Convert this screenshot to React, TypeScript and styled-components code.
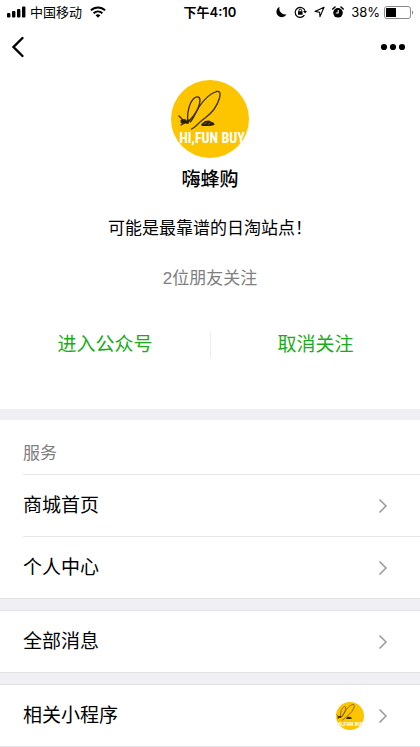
import React from "react";
import styled, { createGlobalStyle } from "styled-components";

const GlobalStyle = createGlobalStyle`
  * { box-sizing: border-box; }
  body {
    margin: 0;
    background: #fff;
    color: #000;
    font-family: "Liberation Sans", "Noto Sans CJK SC", sans-serif;
  }
  button { font: inherit; color: inherit; border: 0; padding: 0; background: none; cursor: pointer; }
  h1, h2, p, ul { margin: 0; padding: 0; font-weight: 400; }
  svg { display: block; flex: none; }
`;

const Page = styled.div`
  display: flex;
  flex-direction: column;
  background: #fff;
`;

const StatusBar = styled.div`
  display: grid;
  grid-template-columns: 1fr auto 1fr;
  align-items: center;
  height: 24px;
  padding: 0 6px;
  font-family: Inter, "Noto Sans CJK SC", sans-serif;
  font-size: 13px;
  line-height: 20px;
  white-space: nowrap;
`;

const StatusGroup = styled.div<{ $end?: boolean; $gap: number }>`
  display: flex;
  align-items: center;
  justify-content: ${(p) => (p.$end ? "flex-end" : "flex-start")};
  gap: ${(p) => p.$gap}px;
`;

const Clock = styled.time`
  font-weight: 600;
`;

const NavBar = styled.nav`
  display: flex;
  align-items: center;
  justify-content: space-between;
  height: 46px;
  padding: 0 14px 0 10px;
`;

const NavButton = styled.button`
  display: flex;
  align-items: center;
  height: 44px;
`;

const Profile = styled.header`
  display: flex;
  flex-direction: column;
  align-items: center;
  padding: 10px 0 51px;
  text-align: center;
`;

const Name = styled.h1`
  margin-top: 8px;
  font-size: 19px;
  line-height: 28px;
  font-weight: 500;
`;

const Summary = styled.p`
  margin-top: 22px;
  font-size: 17px;
  line-height: 26px;
`;

const Friends = styled.p`
  margin-top: 24px;
  font-size: 17px;
  line-height: 26px;
  color: #808080;
`;

const Actions = styled.div`
  display: grid;
  grid-template-columns: 1fr 1fr;
  align-self: stretch;
  margin-top: 40px;
`;

const Action = styled.button`
  height: 26px;
  font-size: 19px;
  line-height: 26px;
  color: #1aad19;

  & + & { border-left: 1px solid #ececec; }
`;

const Divider = styled.div`
  height: 11px;
  background: #efeff4;
`;

const Section = styled.section<{ $ruled?: boolean }>`
  border-top: ${(p) => (p.$ruled ? "1px solid #e2e2e4" : "0")};
  border-bottom: 1px solid #e2e2e4;
`;

const SectionTitle = styled.h2`
  padding: 21px 0 7px 23px;
  font-size: 17px;
  line-height: 26px;
  color: #808080;
`;

const Rows = styled.ul`
  list-style: none;
`;

const RowItem = styled.li<{ $ruled?: boolean }>`
  margin-left: 23px;
  border-top: ${(p) => (p.$ruled ? "1px solid #e8e8e8" : "0")};
`;

const RowButton = styled.button`
  display: flex;
  align-items: center;
  width: 100%;
  height: 61px;
  padding-right: 32px;
  font-size: 19px;
  line-height: 28px;
  text-align: left;
`;

const RowLabel = styled.span`
  flex: 1;
`;

const RowLogo = styled.span`
  margin-right: 14px;
`;

const LogoText = styled.text`
  font-family: "Liberation Sans Narrow", "Roboto Condensed", Roboto, sans-serif;
  font-size: 14px;
  font-weight: 700;
  fill: #fff;
`;

type LogoProps = { size: number; id: string; inset?: number };

const Logo = ({ size, id, inset = 0 }: LogoProps) => (
  <svg
    width={size}
    height={size}
    viewBox={`${inset} ${inset} ${78 - inset * 2} ${78 - inset * 2}`}
    role="img"
    aria-label="HI,FUN BUY"
  >
    <defs>
      <clipPath id={id}>
        <circle cx="39" cy="39" r={39 - inset} />
      </clipPath>
    </defs>
    <g clipPath={`url(#${id})`}>
      <rect width="78" height="78" fill="#fdc400" />
      <g fill="none" stroke="#3a2c08" strokeWidth="1.3" strokeLinecap="round">
        <path d="M16.5 40C16 31 19 21 24 17.5C28 15.5 30 18 28.5 24C27 30 24 35 18 41" />
        <path d="M19 42C22 40 24 33 28 27C32 21 39 13.5 45.5 11.5C49.5 10.5 49.5 14 48.5 18C46.5 25 41 33 34 38C28 42 25 47 20.5 49" />
        <path d="M8 36L11 39M12 44L10 45" />
      </g>
      <ellipse cx="12.5" cy="41.5" rx="3" ry="2.4" fill="#2b2108" />
      <path d="M14.5 41L18.5 39L17.5 44L14.5 43.5Z" fill="#2b2108" />
      <path d="M30 44.5L34 41L38 40.5L43 43L43.5 45L39 46L31 46Z" fill="#2b2108" />
      <path d="M33 44L36 42.5M37 44.5L39.5 42.5" stroke="#8a6a10" strokeWidth="0.8" />
      <LogoText x="41" y="63" textAnchor="middle">HI,FUN BUY</LogoText>
    </g>
  </svg>
);

const Signal = () => (
  <svg width="20" height="12" viewBox="0 0 20 12" aria-hidden="true">
    <rect x="1" y="7" width="3.4" height="4.5" rx="1" />
    <rect x="6" y="5" width="3.4" height="6.5" rx="1" />
    <rect x="11" y="3" width="3.4" height="8.5" rx="1" />
    <rect x="16" y="0.5" width="3.4" height="11" rx="1" />
  </svg>
);

const Wifi = () => (
  <svg width="16" height="12" viewBox="0 0 16 12" aria-hidden="true">
    <g fill="none" stroke="#000" strokeWidth="2">
      <path d="M0.9 4.4C5 0.4 11 0.4 15.1 4.4" />
      <path d="M3.6 7.2C6.2 4.8 9.8 4.8 12.4 7.2" />
    </g>
    <path d="M5.6 9.2Q8 7.2 10.4 9.2L8 11.7Z" />
  </svg>
);

const Moon = () => (
  <svg width="11" height="12" viewBox="0 0 11 12" aria-hidden="true">
    <path d="M3.6 0.8A5.4 5.4 0 1 0 10.6 8.2A5.8 5.8 0 0 1 3.6 0.8Z" />
  </svg>
);

const RotationLock = () => (
  <svg width="13" height="12" viewBox="0 0 13 12" aria-hidden="true">
    <path d="M10.4 9.2A5 5 0 1 1 11 4.9" fill="none" stroke="#000" strokeWidth="1.2" />
    <path d="M9 5H13L11.2 7.6Z" />
    <rect x="4" y="5.2" width="4.6" height="3.6" rx="0.4" />
    <path d="M5 5.4V4.4A1.3 1.3 0 0 1 7.6 4.4V5.4" fill="none" stroke="#000" />
  </svg>
);

const Location = () => (
  <svg width="11" height="12" viewBox="0 0 11 12" aria-hidden="true">
    <path d="M10 1.3L1 5.4L5.6 6.2L6 10.6Z" fill="none" stroke="#000" strokeWidth="1.1" strokeLinejoin="round" />
  </svg>
);

const Alarm = () => (
  <svg width="12" height="12" viewBox="0 0 12 12" aria-hidden="true">
    <circle cx="6" cy="6.8" r="4.8" />
    <path d="M0.8 3L3 1M11.2 3L9 1" stroke="#000" strokeWidth="1.6" strokeLinecap="round" />
    <path d="M6.2 4V7H3.8" fill="none" stroke="#fff" strokeWidth="1.1" />
  </svg>
);

const Battery = () => (
  <svg width="30" height="13" viewBox="0 0 30 13" aria-hidden="true">
    <rect x="0.5" y="0.5" width="26" height="12" rx="2.5" fill="none" stroke="#8a8a8a" />
    <rect x="2" y="2" width="10" height="9" rx="0.5" />
    <path d="M28 4.5C29.6 5 29.6 8 28 8.5Z" fill="#8a8a8a" />
  </svg>
);

const Chevron = () => (
  <svg width="10" height="16" viewBox="0 0 10 16" aria-hidden="true">
    <path d="M1.5 1.5L8 8L1.5 14.5" fill="none" stroke="#999" strokeWidth="1.5" />
  </svg>
);

type RowProps = { label: string; ruled?: boolean; children?: React.ReactNode };

const Row = ({ label, ruled, children }: RowProps) => (
  <RowItem $ruled={ruled}>
    <RowButton>
      <RowLabel>{label}</RowLabel>
      {children}
      <Chevron />
    </RowButton>
  </RowItem>
);

export default function App() {
  return (
    <Page lang="zh-CN">
      <GlobalStyle />
      <StatusBar>
        <StatusGroup $gap={8}>
          <StatusGroup $gap={4}>
            <Signal />
            <span>中国移动</span>
          </StatusGroup>
          <Wifi />
        </StatusGroup>
        <Clock>下午4:10</Clock>
        <StatusGroup $end $gap={7}>
          <Moon />
          <RotationLock />
          <Location />
          <Alarm />
          <StatusGroup $gap={4}>
            <span>38%</span>
            <Battery />
          </StatusGroup>
        </StatusGroup>
      </StatusBar>
      <NavBar>
        <NavButton aria-label="返回">
          <svg width="16" height="22" viewBox="0 0 16 22" aria-hidden="true">
            <path d="M12.5 2L3.5 11L12.5 20" fill="none" stroke="#000" strokeWidth="2.4" strokeLinecap="round" />
          </svg>
        </NavButton>
        <NavButton aria-label="更多">
          <svg width="26" height="8" viewBox="0 0 26 8" aria-hidden="true">
            <circle cx="4" cy="4" r="3.1" />
            <circle cx="13" cy="4" r="3.1" />
            <circle cx="22" cy="4" r="3.1" />
          </svg>
        </NavButton>
      </NavBar>
      <main>
        <Profile>
          <Logo size={78} id="profile-logo" />
          <Name>嗨蜂购</Name>
          <Summary>可能是最靠谱的日淘站点！</Summary>
          <Friends>2位朋友关注</Friends>
          <Actions>
            <Action>进入公众号</Action>
            <Action>取消关注</Action>
          </Actions>
        </Profile>
        <Divider />
        <Section>
          <SectionTitle>服务</SectionTitle>
          <Rows>
            <Row label="商城首页" ruled />
            <Row label="个人中心" ruled />
          </Rows>
        </Section>
        <Divider />
        <Section $ruled>
          <Rows>
            <Row label="全部消息" />
          </Rows>
        </Section>
        <Divider />
        <Section $ruled>
          <Rows>
            <Row label="相关小程序">
              <RowLogo>
                <Logo size={28} id="row-logo" inset={6} />
              </RowLogo>
            </Row>
          </Rows>
        </Section>
      </main>
    </Page>
  );
}
